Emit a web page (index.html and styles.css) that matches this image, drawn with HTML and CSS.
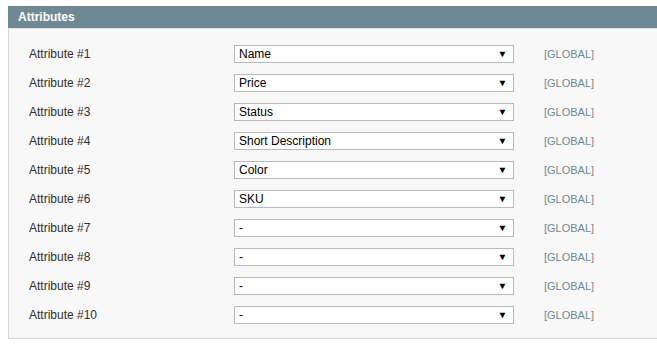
FILE: index.html
```html
<!DOCTYPE html>
<html lang="en">
<head>
  <meta charset="UTF-8">
  <title>Attributes</title>
  <link rel="stylesheet" href="styles.css">
</head>
<body>
  <div class="panel">
    <div class="panel-head">Attributes</div>
    <div class="panel-body">
      <div class="row">
        <span class="label">Attribute #1</span>
        <div class="select"><span>Name</span><span class="arrow">&#9660;</span></div>
        <span class="scope">[GLOBAL]</span>
      </div>
      <div class="row">
        <span class="label">Attribute #2</span>
        <div class="select"><span>Price</span><span class="arrow">&#9660;</span></div>
        <span class="scope">[GLOBAL]</span>
      </div>
      <div class="row">
        <span class="label">Attribute #3</span>
        <div class="select"><span>Status</span><span class="arrow">&#9660;</span></div>
        <span class="scope">[GLOBAL]</span>
      </div>
      <div class="row">
        <span class="label">Attribute #4</span>
        <div class="select"><span>Short Description</span><span class="arrow">&#9660;</span></div>
        <span class="scope">[GLOBAL]</span>
      </div>
      <div class="row">
        <span class="label">Attribute #5</span>
        <div class="select"><span>Color</span><span class="arrow">&#9660;</span></div>
        <span class="scope">[GLOBAL]</span>
      </div>
      <div class="row">
        <span class="label">Attribute #6</span>
        <div class="select"><span>SKU</span><span class="arrow">&#9660;</span></div>
        <span class="scope">[GLOBAL]</span>
      </div>
      <div class="row">
        <span class="label">Attribute #7</span>
        <div class="select"><span>-</span><span class="arrow">&#9660;</span></div>
        <span class="scope">[GLOBAL]</span>
      </div>
      <div class="row">
        <span class="label">Attribute #8</span>
        <div class="select"><span>-</span><span class="arrow">&#9660;</span></div>
        <span class="scope">[GLOBAL]</span>
      </div>
      <div class="row">
        <span class="label">Attribute #9</span>
        <div class="select"><span>-</span><span class="arrow">&#9660;</span></div>
        <span class="scope">[GLOBAL]</span>
      </div>
      <div class="row">
        <span class="label">Attribute #10</span>
        <div class="select"><span>-</span><span class="arrow">&#9660;</span></div>
        <span class="scope">[GLOBAL]</span>
      </div>
    </div>
  </div>
</body>
</html>
```

FILE: styles.css
```css
* {
  margin: 0;
  padding: 0;
  box-sizing: border-box;
}

body {
  padding: 6px 0 0 8px;
  font-family: 'Liberation Sans', Arial, sans-serif;
  background: #fff;
  overflow: hidden;
}

.panel {
  width: 680px;
}

.panel-head {
  height: 23px;
  padding: 0 10px;
  background: #6f8992;
  color: #fff;
  font-size: 12px;
  font-weight: bold;
  line-height: 22px;
  border-bottom: 1px solid #e4e4e4;
}

.panel-body {
  background: #f8f8f8;
  border: 1px solid #d6d6d6;
  border-top: 0;
  padding: 10px 0 9px 20px;
}

.row {
  display: grid;
  grid-template-columns: 175px 280px auto;
  column-gap: 30px;
  align-items: center;
  height: 29px;
}

.label {
  font-size: 12px;
  color: #2f2f2f;
}

.select {
  display: flex;
  justify-content: space-between;
  align-items: center;
  height: 18px;
  padding: 0 6px 0 4px;
  background: #fff;
  border: 1px solid #b9b9b9;
  font-size: 12px;
  color: #000;
}

.arrow {
  font-size: 9px;
  transform: scaleX(1.1);
}

.scope {
  font-size: 11px;
  color: #6f8992;
}
```
